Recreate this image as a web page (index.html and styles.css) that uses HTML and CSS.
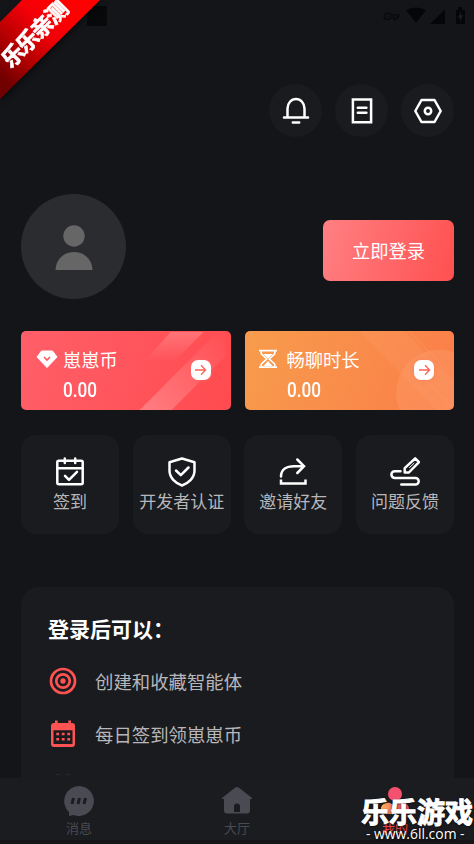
FILE: index.html
```html
<!DOCTYPE html>
<html lang="zh-CN">
<head>
<meta charset="utf-8">
<title>我的</title>
<link rel="stylesheet" href="styles.css">
</head>
<body>
<main class="screen">
  <div class="status">
    <span class="notice"></span>
    <svg class="status-icons" width="84" height="20" viewBox="0 0 84 20">
      <path d="M5.500 7a3.300 3.300 0 1 0 3.200 4.300H12V13h3v-2h1.500V8.700H8.700A3.300 3.300 0 0 0 5.500 7Z" fill="none" stroke="#090a0c" stroke-width="1.500"/><circle cx="5.800" cy="10.200" r="1" fill="#090a0c"/>
      <path d="M24 4Q34-1 44 4L34 17ZM48 18 63 3V18ZM74 4h2V1h4v3h3v14h-9Z" fill="#050608"/>
      <path d="m79 5-3 7h2v4l3-7h-2Z" fill="#1b1c20"/>
    </svg>
  </div>
  <nav class="actions">
    <span class="round"><svg width="30" height="30" viewBox="0 0 30 30"><path d="M6.500 21.500V12.500a8.500 9.500 0 0 1 17 0v9M3 21.600h24M11.800 26.600h6.400"/></svg></span>
    <span class="round"><svg width="30" height="30" viewBox="0 0 30 30"><path stroke-linejoin="miter" d="M5.900 3.600h18.200v22.600H5.900ZM10.800 11.700h8.600M10.800 16.700h8.600"/></svg></span>
    <span class="round"><svg width="30" height="30" viewBox="0 0 30 30"><path d="M8.500 4h13l6.200 11-6.200 11h-13L2.300 15Z"/><circle cx="15" cy="15" r="3.200"/></svg></span>
  </nav>
  <section class="profile">
    <span class="avatar"><svg width="38" height="46" viewBox="0 0 38 46"><circle cx="19" cy="11" r="10.700"/><path d="M.500 45C1 34 9 27 19 27s18 7 18.500 18Z"/></svg></span>
    <button class="login">立即登录</button>
  </section>
  <section class="wallets">
    <article class="wallet coin">
      <svg class="deco" viewBox="0 0 210 79" preserveAspectRatio="none">
        <defs><linearGradient id="fade" x2="0" y2="1"><stop stop-color="#fff" stop-opacity=".2"/><stop offset="1" stop-color="#fff" stop-opacity="0"/></linearGradient><linearGradient id="beam" x1="0" y1="1" x2="1" y2="0"><stop stop-color="#fff" stop-opacity=".25"/><stop offset="1" stop-color="#fff" stop-opacity="0"/></linearGradient></defs>
        <path d="M150 1h33l-29 29h-30Z" fill="url(#fade)"/><path d="M119 79 197 1h8v24l-54 54Z" fill="url(#beam)"/>
      </svg>
      <svg class="wallet-icon" width="22" height="20" viewBox="0 0 22 20"><path d="M5.500 2h11L21 8 11 18.600 1 8Z" fill="#fff" stroke="#fff" stroke-linejoin="round"/><path d="m8 8 3 3 3-3" fill="none" stroke="#ff5960" stroke-width="1.700"/></svg>
      <div class="wallet-text"><span>崽崽币</span><b>0.00</b></div>
      <span class="go"><svg width="13" height="12" viewBox="0 0 13 12"><path d="M1 6h10.500M7 1.300 11.600 6 7 10.700"/></svg></span>
    </article>
    <article class="wallet time">
      <svg class="deco" viewBox="0 0 210 79" preserveAspectRatio="none"><path d="M114 0h46l50 50v29h-18Z" fill="#ffaf80" opacity=".15"/><circle cx="195" cy="62" r="43.500" fill="#ffa878" opacity=".28"/><path d="m164 0 38 39M164 31l45 47" stroke="#ffa475" stroke-width=".8" opacity=".5"/></svg>
      <svg class="wallet-icon" width="20" height="20" viewBox="0 0 20 20" fill="none" stroke="#fff" stroke-width="1.700"><path d="M1 1.700h18M1 18.200h18M3.300 2v3L8.700 10l-5.400 5v3M16.700 2v3L11.300 10l5.400 5v3"/><path d="M5 5h10l-5 4.500ZM5.500 17 10 12l4.500 5Z" fill="#fff" stroke="none"/></svg>
      <div class="wallet-text"><span>畅聊时长</span><b>0.00</b></div>
      <span class="go"><svg width="13" height="12" viewBox="0 0 13 12"><path d="M1 6h10.500M7 1.300 11.600 6 7 10.700"/></svg></span>
    </article>
  </section>
  <section class="tiles">
    <div class="tile"><svg width="30" height="30" viewBox="0 0 30 30"><rect x="2.300" y="3.700" width="25.400" height="23.600" rx="1.500"/><path d="M2.300 11.200h25.400M9.800 1.500V6M20.200 1.500V6M10 18.800l4 4 8-8"/></svg><span>签到</span></div>
    <div class="tile"><svg width="30" height="30" viewBox="0 0 30 30"><path d="M15 1.500 2.500 5.200v8.600C2.500 21 9 26.500 15 28.500 21 26.500 27.500 21 27.500 13.800V5.200ZM9 13.500l4.800 4.700 7.700-7.700"/></svg><span>开发者认证</span></div>
    <div class="tile"><svg width="30" height="30" viewBox="0 0 30 30"><path d="M3 19.500C3 12 9 9.200 16 9.200h10M19.300 2.500 26 9.200l-6.700 6.800" stroke-linejoin="miter"/><path d="M3 22.500v4h24.500v-4" stroke-linecap="butt" stroke-linejoin="miter"/></svg><span>邀请好友</span></div>
    <div class="tile"><svg width="30" height="30" viewBox="0 0 30 30"><path d="M10.500 14.200H4.800a3.400 3.400 0 0 0 0 6.800H25.400a3.300 3.300 0 0 1 0 6.600H11.300M14.700 15.500v-4.300L25.200 1.300 29 5.100 18.900 15.500Z"/><path d="m19.500 10.600 4.500-4.300" stroke-width="1"/></svg><span>问题反馈</span></div>
  </section>
  <section class="panel">
    <h2>登录后可以：</h2>
    <div class="benefit"><svg width="28" height="28" viewBox="0 0 28 28" fill="none" stroke="#ff5353" stroke-width="2.700"><circle cx="14" cy="14" r="12"/><circle cx="14" cy="14" r="6.700"/><circle cx="14" cy="14" r="2.700" fill="#ff5353" stroke="none"/></svg><span>创建和收藏智能体</span></div>
    <div class="benefit"><svg width="28" height="28" viewBox="0 0 28 28"><path d="M5 3h1V.500h2.700V3h10.600V.500H22V3h1a3 3 0 0 1 3 3v18a3 3 0 0 1-3 3H5a3 3 0 0 1-3-3V6a3 3 0 0 1 3-3Zm-.500 7.300V24h19V10.300Z" fill="#ff5353" fill-rule="evenodd"/><path d="M7.300 14h14M7.300 19.300h14" stroke="#ff5353" stroke-width="2.400" stroke-dasharray="2.800 2.700"/></svg><span>每日签到领崽崽币</span></div>
    <div class="peek"><i></i><i></i></div>
  </section>
</main>
<footer class="tabs">
  <div class="tab"><svg width="32" height="32" viewBox="0 0 32 32"><path d="M16 1a15 15 0 1 1-5.500 29L6 31V27A15 15 0 0 1 16 1Z" fill="#4a4a52"/><path d="m10.500 13-1.500 6M16.500 13l-1.500 6M22.500 13l-1.500 6" stroke="#1b1c1f" stroke-width="3"/></svg><span>消息</span></div>
  <div class="tab"><svg width="32" height="32" viewBox="0 0 32 32"><path d="M14.300 2.500a3 3 0 0 1 3.400 0L31 13v1h-2v11.500a3 3 0 0 1-3 3H6a3 3 0 0 1-3-3V14H1v-1ZM13 27h6v-5.500a3 3 0 0 0-6 0Z" fill="#4a4a52" fill-rule="evenodd"/></svg><span>大厅</span></div>
  <div class="tab active"><svg width="32" height="32" viewBox="0 0 32 32"><defs><linearGradient id="me"><stop stop-color="#ffb44f"/><stop offset=".5" stop-color="#fa6e69"/><stop offset="1" stop-color="#f4516f"/></linearGradient></defs><circle cx="16" cy="9" r="7" fill="#f4516f"/><path d="M2 29V24c0-5 5-7 9-6q5 3 10 0c5-1 9 2 9 6v5Z" fill="url(#me)"/></svg><span>我的</span></div>
</footer>
<div class="ribbon"><div class="ribbon-band"></div><span>乐乐亲测</span></div>
<div class="site-mark"><strong>乐乐游戏</strong><span>- www.6ll.com -</span></div>
</body>
</html>
```

FILE: styles.css
```css
* { box-sizing: border-box; }
body {
  margin: 0; width: 474px; height: 844px; overflow: hidden; position: relative;
  display: flex; flex-direction: column; background: #141519; color: #fff;
  font-family: "Noto Sans CJK SC", sans-serif;
}
svg { display: block; flex: none; }
.screen { height: 778px; overflow: hidden; padding: 0 20px 0 21px; }
.status { height: 84px; padding: 6px 0 0 66px; display: flex; justify-content: space-between; }
.notice { width: 20px; height: 20px; background: #08090b; }
.status-icons { margin-right: -12px; }
.actions { display: flex; justify-content: flex-end; gap: 13px; height: 53px; }
.round { width: 53px; height: 53px; border-radius: 50%; background: #1a1b1e; display: flex; align-items: center; justify-content: center; }
.round svg, .tile svg { fill: none; stroke: #fff; stroke-width: 2.500; stroke-linecap: round; stroke-linejoin: round; }
.profile { margin-top: 57px; height: 105px; display: flex; align-items: center; justify-content: space-between; }
.avatar { width: 105px; height: 105px; border-radius: 50%; background: #2b2c30; display: flex; align-items: center; justify-content: center; }
.avatar svg { fill: #666; margin-top: 2px; }
.login { width: 131px; height: 61px; margin-top: 8px; padding: 0 0 2px; border: 0; border-radius: 7px; background: linear-gradient(105deg, #ff8083, #ff5050); color: #fff; font: 18.300px "Noto Sans CJK SC", sans-serif; }
.wallets { margin-top: 32px; display: grid; grid-template-columns: 1fr 1fr; gap: 14px; }
.wallet { position: relative; height: 79px; border-radius: 5px; overflow: hidden; display: flex; padding: 16px 20px 0 15px; }
.coin { background: linear-gradient(110deg, #ff5f69, #ff4b4f); }
.time { background: linear-gradient(110deg, #f79c4c, #fb7d49); }
.deco { position: absolute; inset: 0; width: 100%; height: 100%; }
.wallet-icon { position: relative; margin-top: 2px; }
.time .wallet-icon { margin-left: -2px; margin-right: 4px; }
.wallet-text { position: relative; margin-left: 5px; flex: 1; display: flex; flex-direction: column; font-size: 18.300px; line-height: 24px; white-space: nowrap; }
.wallet-text b { font: 500 19.500px/24px Roboto, sans-serif; margin-top: 8px; transform: scaleX(.88); transform-origin: left; }
.go { position: relative; width: 20px; height: 20px; margin-top: 13px; border-radius: 7px; background: #fff; display: flex; align-items: center; justify-content: center; box-shadow: 0 0 4px #ff705f88; }
.go svg { fill: none; stroke: #ff6258; stroke-width: 1.300; }
.tiles { margin-top: 25px; display: grid; grid-template-columns: repeat(4, 1fr); gap: 13.500px; }
.tile { height: 99px; border-radius: 15px; background: #1a1b1e; padding-top: 22px; display: flex; flex-direction: column; align-items: center; }
.tile span { font-size: 17px; line-height: 26px; margin-top: 1px; color: #b7b7bb; white-space: nowrap; }
.panel { margin-top: 53px; height: 230px; border-radius: 18px; background: #1a1b1e; padding: 26px 27px; }
h2 { margin: 0 0 25px; font-size: 21px; line-height: 30px; font-weight: 700; }
.benefit { height: 28px; margin-bottom: 25px; display: flex; align-items: center; gap: 18px; padding-left: 1px; color: #b7b7bb; font-size: 18.400px; }
.benefit span { position: relative; top: -1px; }
.benefit svg { position: relative; top: -1px; }
.peek { display: flex; gap: 6px; padding-left: 8px; margin-top: 3px; }
.peek i { width: 4px; height: 1px; background: #382024; }
.tabs { height: 66px; background: #1b1c1f; border-bottom: 4px solid #161519; display: grid; grid-template-columns: repeat(3, 1fr); }
.tab { padding-top: 7px; display: flex; flex-direction: column; align-items: center; color: #4a4a52; font-size: 13px; line-height: 20px; }
.tab span { margin-top: 1px; }
.active { color: #ed4448; }
.ribbon { position: absolute; left: 0; top: 0; width: 110px; height: 110px; filter: drop-shadow(1px 2px 3px #0008); }
.ribbon-band { width: 100px; height: 100px; background: linear-gradient(to top right, #710000 12%, #a80000 30%, #f20008 58%, #f00 80%); clip-path: polygon(22px 0, 100px 0, 0 99px, 0 22px); }
.ribbon span { position: absolute; left: -11px; top: 18px; width: 88px; text-align: center; font-size: 22px; line-height: 30px; letter-spacing: -1.500px; font-weight: 700; -webkit-text-stroke: .7px #fff; white-space: nowrap; transform: rotate(-45deg); }
.site-mark { position: absolute; left: 361px; top: 794px; width: 113px; display: flex; flex-direction: column; text-shadow: 1px 1px 2px #000b, -1px 0 2px #0008; white-space: nowrap; }
.site-mark strong { font-size: 28px; line-height: 34px; font-weight: 700; -webkit-text-stroke: 1px #fff; }
.site-mark span { padding-left: 5px; font: 13.900px/12px "Open Sans", sans-serif; }
```
